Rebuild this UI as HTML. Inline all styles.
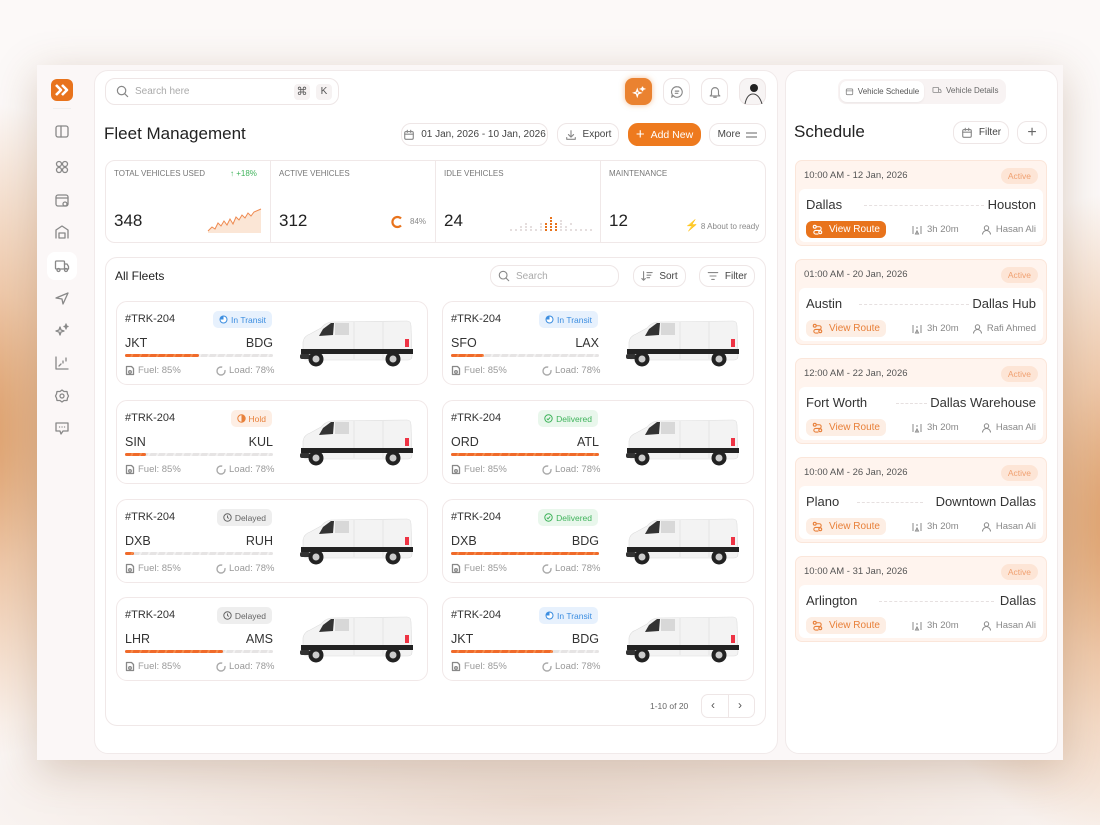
<!DOCTYPE html>
<html><head><meta charset="utf-8">
<style>
*{box-sizing:border-box;margin:0;padding:0}
body{width:1100px;height:825px;overflow:hidden;font-family:"Liberation Sans",sans-serif;color:#222;position:relative;
background:
radial-gradient(ellipse 260px 330px at -40px 430px,#d9955a 0%,rgba(230,170,120,.6) 45%,rgba(255,255,255,0) 100%),
radial-gradient(ellipse 260px 330px at 1140px 520px,#d9955a 0%,rgba(230,170,120,.6) 45%,rgba(255,255,255,0) 100%),
radial-gradient(ellipse 700px 120px at 550px 800px,rgba(220,190,170,.5),rgba(255,255,255,0)),
#fcf9f8}
.frame{position:absolute;left:37px;top:65px;width:1026px;height:695px;background:#fbf7f7;box-shadow:0 10px 40px rgba(120,70,30,.25)}
.abs{position:absolute}
.panel{position:absolute;background:#fff;border:1px solid #f1eaea;border-radius:14px}
.btn{position:absolute;border:1px solid #eee6e6;border-radius:9px;background:#fff;font-size:10px;color:#444;display:flex;align-items:center;justify-content:center;gap:6px}
svg{display:block}
.ic{stroke:#888;fill:none;stroke-width:1.3;stroke-linecap:round;stroke-linejoin:round}
.card{position:absolute;width:312px;height:84px;border:1px solid #f1e8e8;border-radius:11px;background:#fff}
.card .id{position:absolute;left:8px;top:11px;font-size:11px;color:#333}
.badge{position:absolute;top:9px;right:155px;height:17px;border-radius:5px;font-size:8.5px;display:flex;align-items:center;gap:3px;padding:0 6px}
.b-t{background:#e7f1fd;color:#3b8de0}
.b-h{background:#fdeee4;color:#e8803a}
.b-d{background:#e9f7ec;color:#3fb35b}
.b-y{background:#eeeeee;color:#666}
.card .from{position:absolute;left:8px;top:34px;font-size:12.5px;color:#333}
.card .to{position:absolute;left:118px;width:38px;text-align:right;top:34px;font-size:12.5px;color:#333}
.bar{position:absolute;left:8px;top:52px;width:148px;height:3px;border-radius:2px;background:repeating-linear-gradient(110deg,#e6e4e4 0 6px,#f3f2f2 6px 8px)}
.bar i{display:block;height:3px;border-radius:2px;background:repeating-linear-gradient(110deg,#f06a2a 0 6px,#f58a4a 6px 8px)}
.meta{position:absolute;top:63px;font-size:9.5px;color:#999;display:flex;align-items:center;gap:3px}
.van{position:absolute;left:180px;top:16px}
.sc{position:absolute;left:795px;width:252px;height:86px;background:#fff4ee;border:1px solid #fbe6da;border-radius:7px}
.sc .t{position:absolute;left:8px;top:9px;font-size:9.5px;color:#555}
.sc .act{position:absolute;right:8px;top:7px;background:#fde5d6;color:#f0a070;font-size:8.5px;border-radius:8px;padding:3px 7px}
.sc .in{position:absolute;left:3px;right:3px;top:28px;bottom:3px;background:#fff;border-radius:6px}
.sc .a{position:absolute;left:7px;top:8px;font-size:13px;color:#333}
.sc .b{position:absolute;right:7px;top:8px;font-size:13px;color:#333}
.sc .dash{position:absolute;top:16px;border-top:1px dashed #e6e0e0}
.vr{position:absolute;left:7px;top:32px;height:17px;width:80px;border-radius:6px;font-size:10px;display:flex;align-items:center;justify-content:center;gap:6px}
.vr.on{background:#e8731c;color:#fff}
.vr.off{background:#fdeee4;color:#e8803a}
.sm{position:absolute;top:35px;font-size:9.5px;color:#888;display:flex;align-items:center;gap:5px}
</style></head><body>
<svg width="0" height="0" style="position:absolute"><defs>
<g id="van">
<path d="M6 36 L6 24 Q7 18 13 16 L24 10 Q28 5 34 4 L110 3 Q114 3 114 8 L115 38 Q115 42 111 42 L10 42 Q6 42 6 38Z" fill="#f3f3f3" stroke="#ddd" stroke-width=".6"/>
<path d="M26 11 L34 5 L37 5 L36 17 L22 18Z" fill="#333"/>
<path d="M38 5 L52 5 L52 17 L38 17Z" fill="#d8d8d8"/>
<line x1="57" y1="4" x2="57" y2="41" stroke="#ddd" stroke-width=".7"/>
<line x1="86" y1="4" x2="86" y2="41" stroke="#ddd" stroke-width=".7"/>
<rect x="4" y="31" width="112" height="5" fill="#222"/>
<rect x="3" y="36" width="10" height="5" rx="2" fill="#333"/>
<rect x="108" y="21" width="4" height="8" fill="#e34"/>
<circle cx="19" cy="41" r="7.5" fill="#222"/><circle cx="19" cy="41" r="3.5" fill="#ccc"/>
<circle cx="96" cy="41" r="7.5" fill="#222"/><circle cx="96" cy="41" r="3.5" fill="#ccc"/>
</g></defs></svg>

<div class="frame"></div>
<div class="abs" style="left:51px;top:79px;width:22px;height:22px;background:#e8731c;border-radius:6px;display:flex;align-items:center;justify-content:center">
<svg width="14" height="12" viewBox="0 0 14 12"><path d="M1 1 L6 6 L1 11 M7 1 L12 6 L7 11" stroke="#fff" stroke-width="2.6" fill="none" stroke-linejoin="round"/></svg></div>
<div class="abs" style="left:53px;top:108px;width:18px;border-top:1px solid #eee"></div>
<div class="abs" style="left:47px;top:252px;width:30px;height:28px;background:#fff;border-radius:8px"></div>
<svg class="abs" style="left:54px;top:123px" width="16" height="320" viewBox="0 0 16 320">
<g class="ic"><rect x="2" y="3" width="12" height="11" rx="2"/><line x1="7" y1="3" x2="7" y2="14"/></g>
<g class="ic" transform="translate(0,36)"><circle cx="5" cy="5" r="2.5"/><circle cx="11" cy="5" r="2.5"/><circle cx="5" cy="11" r="2.5"/><circle cx="11" cy="11" r="2.5"/></g>
<g class="ic" transform="translate(0,69)"><rect x="2" y="3" width="12" height="11" rx="2"/><line x1="2" y1="6" x2="14" y2="6"/><circle cx="11" cy="12" r="2"/></g>
<g class="ic" transform="translate(0,101)"><path d="M2 14 L2 6 L8 2 L14 6 L14 14"/><rect x="5" y="9" width="6" height="5"/></g>
<g class="ic" transform="translate(0,134)"><rect x="1.5" y="4" width="9" height="8" rx="1"/><path d="M10.5 7 L13 7 L14.5 9.5 L14.5 12 L10.5 12"/><circle cx="4.5" cy="13" r="1.5"/><circle cx="12" cy="13" r="1.5"/></g>
<g class="ic" transform="translate(0,167)"><path d="M2 8 L14 3 L9 14 L8 9Z"/></g>
<g class="ic" transform="translate(0,199)"><path d="M6 5 L7 8 L10 9 L7 10 L6 13 L5 10 L2 9 L5 8Z"/><path d="M12 2 L12.5 4 L14 4.5 L12.5 5 L12 7 L11.5 5 L10 4.5 L11.5 4Z"/></g>
<g class="ic" transform="translate(0,232)"><path d="M2 2 L2 14 L14 14"/><path d="M5 11 L7 9 M9 8 L9 6 M12 6 L12 3"/></g>
<g class="ic" transform="translate(0,265)"><circle cx="8" cy="8" r="2"/><path d="M8 2 L10 3.5 L13 3.5 L13.5 6 L14.5 8 L13.5 10 L13 12.5 L10 12.5 L8 14 L6 12.5 L3 12.5 L2.5 10 L1.5 8 L2.5 6 L3 3.5 L6 3.5Z"/></g>
<g class="ic" transform="translate(0,297)"><path d="M2 3 L14 3 L14 11 L9 11 L7 14 L6 11 L2 11Z"/><path d="M5.5 7h.1 M8 7h.1 M10.5 7h.1"/></g>
</svg>

<div class="panel" style="left:94px;top:70px;width:684px;height:684px;border-radius:14px"></div>
<div class="btn" style="left:105px;top:78px;width:234px;height:27px;justify-content:flex-start;padding-left:10px;border-radius:10px;color:#aaa">
<svg width="13" height="13" viewBox="0 0 14 14"><g class="ic" stroke="#999"><circle cx="6" cy="6" r="4.5"/><line x1="9.5" y1="9.5" x2="12.5" y2="12.5"/></g></svg>Search here
<span style="position:absolute;left:188px;top:5px;width:16px;height:16px;background:#f6f2f2;border-radius:4px;font-size:11px;color:#555;text-align:center;line-height:16px">⌘</span>
<span style="position:absolute;left:210px;top:5px;width:16px;height:16px;background:#f6f2f2;border-radius:4px;font-size:10px;color:#555;text-align:center;line-height:16px">K</span></div>
<div class="abs" style="left:625px;top:78px;width:27px;height:27px;background:#ea8230;border-radius:8px;box-shadow:0 0 6px rgba(234,130,48,.5);display:flex;align-items:center;justify-content:center">
<svg width="14" height="14" viewBox="0 0 16 16"><g stroke="#fff" fill="none" stroke-width="1.4"><path d="M6 5 L7 8 L10 9 L7 10 L6 13 L5 10 L2 9 L5 8Z"/><path d="M12 2 L12.5 4 L14 4.5 L12.5 5 L12 7 L11.5 5 L10 4.5 L11.5 4Z"/></g></svg></div>
<div class="btn" style="left:663px;top:78px;width:27px;height:27px"><svg width="14" height="14" viewBox="0 0 16 16"><g class="ic" stroke="#555"><path d="M8 2a6 6 0 1 1-4.5 10L2 14l.6-3A6 6 0 0 1 8 2z"/><line x1="6" y1="7" x2="10" y2="7"/><line x1="6" y1="9.5" x2="9" y2="9.5"/></g></svg></div>
<div class="btn" style="left:701px;top:78px;width:27px;height:27px"><svg width="14" height="14" viewBox="0 0 16 16"><g class="ic" stroke="#555"><path d="M4 11V7a4 4 0 0 1 8 0v4l1.5 1.5h-11z"/><path d="M6.5 14h3"/></g></svg></div>
<div class="btn" style="left:739px;top:78px;width:27px;height:27px;background:#f7f4f4"><svg width="22" height="24" viewBox="0 0 22 24"><circle cx="12" cy="8" r="4" fill="#222"/><path d="M3 24 Q5 14 11 14 Q17 14 20 24" stroke="#444" fill="none" stroke-width="1"/></svg></div>

<div class="abs" style="left:104px;top:124px;font-size:17px;color:#222">Fleet Management</div>
<div class="btn" style="left:401px;top:123px;width:147px;height:23px;border-radius:10px"><svg width="12" height="12" viewBox="0 0 14 14"><g class="ic" stroke="#555"><rect x="2" y="3" width="10" height="9" rx="1.5"/><line x1="2" y1="6" x2="12" y2="6"/><line x1="5" y1="1.5" x2="5" y2="4"/><line x1="9" y1="1.5" x2="9" y2="4"/></g></svg>01 Jan, 2026 - 10 Jan, 2026</div>
<div class="btn" style="left:557px;top:123px;width:62px;height:23px;border-radius:10px"><svg width="12" height="12" viewBox="0 0 14 14"><g class="ic" stroke="#555"><path d="M7 2v7M4 6.5l3 3 3-3M2 10v2h10v-2"/></g></svg>Export</div>
<div class="btn" style="left:628px;top:123px;width:73px;height:23px;border-radius:10px;background:#ee7a1e;border-color:#ee7a1e;color:#fff;font-size:10.5px"><span style="font-size:15px;line-height:10px">+</span>Add New</div>
<div class="btn" style="left:709px;top:123px;width:57px;height:23px;border-radius:10px">More <svg width="11" height="8"><path d="M0 2h11M0 6h11" stroke="#666"/></svg></div>

<div class="abs" style="left:105px;top:160px;width:661px;height:83px;border:1px solid #f0e8e8;border-radius:10px;background:#fff"></div>
<div class="abs" style="left:270px;top:161px;height:81px;border-left:1px solid #f0e8e8"></div>
<div class="abs" style="left:435px;top:161px;height:81px;border-left:1px solid #f0e8e8"></div>
<div class="abs" style="left:600px;top:161px;height:81px;border-left:1px solid #f0e8e8"></div>
<div class="abs" style="left:114px;top:169px;font-size:8px;color:#777">TOTAL VEHICLES USED</div>
<div class="abs" style="left:230px;top:169px;font-size:8px;color:#3fb35b">↑ +18%</div>
<div class="abs" style="left:114px;top:211px;font-size:17px">348</div>
<svg class="abs" style="left:207px;top:207px" width="55" height="26" viewBox="0 0 55 26"><path d="M1 24 L5 20 L8 22 L11 16 L14 19 L17 14 L20 18 L23 12 L26 17 L29 10 L32 13 L35 8 L38 11 L41 6 L44 9 L47 5 L54 2 L54 26 L1 26Z" fill="#fbe6d6"/><path d="M1 24 L5 20 L8 22 L11 16 L14 19 L17 14 L20 18 L23 12 L26 17 L29 10 L32 13 L35 8 L38 11 L41 6 L44 9 L47 5 L54 2" stroke="#ef8a50" fill="none" stroke-width="1"/></svg>
<div class="abs" style="left:279px;top:169px;font-size:8px;color:#777">ACTIVE VEHICLES</div>
<div class="abs" style="left:279px;top:211px;font-size:17px">312</div>
<svg class="abs" style="left:390px;top:215px" width="14" height="14"><path d="M11 3.5 A5 5 0 1 0 11 10.5" stroke="#e8731c" stroke-width="2.2" fill="none"/></svg>
<div class="abs" style="left:410px;top:217px;font-size:8px;color:#888">84%</div>
<div class="abs" style="left:444px;top:169px;font-size:8px;color:#777">IDLE VEHICLES</div>
<div class="abs" style="left:444px;top:211px;font-size:17px">24</div>
<svg class="abs" style="left:510px;top:214px" width="86" height="18" viewBox="0 0 86 18">
<g fill="#e5dede"><rect x="0" y="15" width="2" height="2"/><rect x="5" y="15" width="2" height="2"/><rect x="10" y="12" width="2" height="2"/><rect x="10" y="15" width="2" height="2"/><rect x="15" y="9" width="2" height="2"/><rect x="15" y="12" width="2" height="2"/><rect x="15" y="15" width="2" height="2"/><rect x="20" y="12" width="2" height="2"/><rect x="20" y="15" width="2" height="2"/><rect x="25" y="15" width="2" height="2"/><rect x="30" y="9" width="2" height="2"/><rect x="30" y="12" width="2" height="2"/><rect x="30" y="15" width="2" height="2"/><rect x="50" y="6" width="2" height="2"/><rect x="50" y="9" width="2" height="2"/><rect x="50" y="12" width="2" height="2"/><rect x="50" y="15" width="2" height="2"/><rect x="55" y="12" width="2" height="2"/><rect x="55" y="15" width="2" height="2"/><rect x="60" y="9" width="2" height="2"/><rect x="60" y="15" width="2" height="2"/><rect x="65" y="15" width="2" height="2"/><rect x="70" y="15" width="2" height="2"/><rect x="75" y="15" width="2" height="2"/><rect x="80" y="15" width="2" height="2"/></g>
<g fill="#e8731c"><rect x="35" y="9" width="2" height="2"/><rect x="35" y="12" width="2" height="2"/><rect x="35" y="15" width="2" height="2"/><rect x="40" y="3" width="2" height="2"/><rect x="40" y="6" width="2" height="2"/><rect x="40" y="9" width="2" height="2"/><rect x="40" y="12" width="2" height="2"/><rect x="40" y="15" width="2" height="2"/><rect x="45" y="9" width="2" height="2"/><rect x="45" y="12" width="2" height="2"/><rect x="45" y="15" width="2" height="2"/></g></svg>
<div class="abs" style="left:609px;top:169px;font-size:8px;color:#777">MAINTENANCE</div>
<div class="abs" style="left:609px;top:211px;font-size:17px">12</div>
<div class="abs" style="left:685px;top:219px;font-size:8px;color:#888"><span style="color:#e8731c;font-size:11px">⚡</span> 8 About to ready</div>

<div class="abs" style="left:105px;top:257px;width:661px;height:469px;border:1px solid #f0e8e8;border-radius:12px;background:#fff"></div>
<div class="abs" style="left:115px;top:269px;font-size:12px;color:#222">All Fleets</div>
<div class="btn" style="left:490px;top:265px;width:129px;height:22px;justify-content:flex-start;padding-left:7px;color:#aaa;border-radius:10px"><svg width="12" height="12" viewBox="0 0 14 14"><g class="ic" stroke="#999"><circle cx="6" cy="6" r="4.5"/><line x1="9.5" y1="9.5" x2="12.5" y2="12.5"/></g></svg>Search</div>
<div class="btn" style="left:633px;top:265px;width:53px;height:22px;border-radius:10px"><svg width="12" height="12" viewBox="0 0 14 14"><g class="ic" stroke="#555"><path d="M3 2v10M1 10l2 2 2-2M7 3h6M7 6h4.5M7 9h3"/></g></svg>Sort</div>
<div class="btn" style="left:699px;top:265px;width:56px;height:22px;border-radius:10px"><svg width="12" height="12" viewBox="0 0 14 14"><g class="ic" stroke="#555"><path d="M1.5 3h11M3.5 7h7M5.5 11h3"/></g></svg>Filter</div>

<div id="cards"></div>

<div class="abs" style="left:650px;top:701px;font-size:8.5px;color:#666">1-10 of 20</div>
<div class="abs" style="left:701px;top:694px;width:54px;height:24px;border:1px solid #eee6e6;border-radius:7px;background:#fff"></div>
<div class="abs" style="left:728px;top:695px;height:22px;border-left:1px solid #eee6e6"></div>
<div class="abs" style="left:711px;top:698px;font-size:12px;color:#555">‹</div>
<div class="abs" style="left:738px;top:698px;font-size:12px;color:#555">›</div>

<div class="panel" style="left:785px;top:70px;width:273px;height:684px"></div>
<div class="abs" style="left:838px;top:79px;width:168px;height:25px;background:#f8f3f3;border-radius:8px"></div>
<div class="abs" style="left:840px;top:81px;width:84px;height:21px;background:#fff;border-radius:7px;box-shadow:0 1px 2px rgba(0,0,0,.06);font-size:8px;color:#555;display:flex;align-items:center;justify-content:center;gap:4px"><svg width="9" height="9" viewBox="0 0 14 14"><g class="ic"><rect x="2" y="3" width="10" height="9" rx="1.5"/><line x1="2" y1="6" x2="12" y2="6"/></g></svg>Vehicle Schedule</div>
<div class="abs" style="left:932px;top:86px;font-size:8px;color:#666;display:flex;gap:4px;align-items:center"><svg width="10" height="9" viewBox="0 0 16 14"><g class="ic"><rect x="1.5" y="2" width="9" height="8" rx="1"/><path d="M10.5 5 L13 5 L14.5 7.5 L14.5 10 L10.5 10"/></g></svg>Vehicle Details</div>
<div class="abs" style="left:794px;top:122px;font-size:17px;color:#222">Schedule</div>
<div class="btn" style="left:953px;top:121px;width:56px;height:23px;border-radius:10px"><svg width="12" height="12" viewBox="0 0 14 14"><g class="ic" stroke="#555"><rect x="2" y="3" width="10" height="9" rx="1.5"/><line x1="2" y1="6" x2="12" y2="6"/><line x1="5" y1="1.5" x2="5" y2="4"/><line x1="9" y1="1.5" x2="9" y2="4"/></g></svg>Filter</div>
<div class="btn" style="left:1017px;top:121px;width:30px;height:23px;border-radius:10px;font-size:16px;color:#666">+</div>
<div id="sched"></div>

<script>
var cards=[
[116,301,'In Transit','t','JKT','BDG',50],[442,301,'In Transit','t','SFO','LAX',22],
[116,400,'Hold','h','SIN','KUL',14],[442,400,'Delivered','d','ORD','ATL',100],
[116,499,'Delayed','y','DXB','RUH',6],[442,499,'Delivered','d','DXB','BDG',100],
[116,597,'Delayed','y','LHR','AMS',66],[442,597,'In Transit','t','JKT','BDG',69]];
var ico={t:'<svg width="9" height="9"><circle cx="4.5" cy="4.5" r="4" fill="#3b8de0"/><path d="M4.5 1.5A3 3 0 1 1 1.5 4.5H4.5Z" fill="#fff"/></svg>',
h:'<svg width="9" height="9"><circle cx="4.5" cy="4.5" r="3.7" fill="none" stroke="#e8803a"/><path d="M4.5 1A3.5 3.5 0 0 1 4.5 8Z" fill="#e8803a"/></svg>',
d:'<svg width="9" height="9"><circle cx="4.5" cy="4.5" r="3.7" fill="none" stroke="#3fb35b"/><path d="M2.8 4.6l1.2 1.2 2.2-2.4" stroke="#3fb35b" fill="none"/></svg>',
y:'<svg width="9" height="9"><circle cx="4.5" cy="4.5" r="3.7" fill="none" stroke="#666"/><path d="M4.5 2.5v2l1.3 1" stroke="#666" fill="none"/></svg>'};
var h='';
cards.forEach(function(c){
h+='<div class="card" style="left:'+c[0]+'px;top:'+c[1]+'px"><div class="id">#TRK-204</div>'+
'<div class="badge b-'+c[3]+'">'+ico[c[3]]+c[2]+'</div>'+
'<div class="from">'+c[4]+'</div><div class="to">'+c[5]+'</div>'+
'<div class="bar"><i style="width:'+c[6]+'%"></i></div>'+
'<div class="meta" style="left:8px"><svg width="10" height="11" viewBox="0 0 10 11"><g class="ic" stroke="#aaa" stroke-width="1"><path d="M1.5 1.5h5l2 2v6h-7z"/><circle cx="5" cy="7" r="1.3"/></g></svg> Fuel: 85%</div>'+
'<div class="meta" style="left:99px"><svg width="10" height="10" viewBox="0 0 10 10"><circle cx="5" cy="5" r="4" stroke="#aaa" stroke-width="1.4" fill="none" stroke-dasharray="20 4"/></svg> Load: 78%</div>'+
'<svg class="van" width="118" height="52" viewBox="0 0 118 52"><use href="#van"/></svg></div>';});
document.getElementById('cards').innerHTML=h;
var s=[[160,'10:00 AM - 12 Jan, 2026','Dallas','Houston','Hasan Ali',1,65,185],[259,'01:00 AM - 20 Jan, 2026','Austin','Dallas Hub','Rafi Ahmed',0,60,170],
[358,'12:00 AM - 22 Jan, 2026','Fort Worth','Dallas Warehouse','Hasan Ali',0,97,128],[457,'10:00 AM - 26 Jan, 2026','Plano','Downtown Dallas','Hasan Ali',0,58,124],
[556,'10:00 AM - 31 Jan, 2026','Arlington','Dallas','Hasan Ali',0,80,195]];
var g='';
s.forEach(function(r){
g+='<div class="sc" style="top:'+r[0]+'px"><div class="t">'+r[1]+'</div><div class="act">Active</div><div class="in">'+
'<div class="a">'+r[2]+'</div><div class="b">'+r[3]+'</div><div class="dash" style="left:'+r[6]+'px;width:'+(r[7]-r[6])+'px"></div>'+
'<div class="vr '+(r[5]?'on':'off')+'"><svg width="11" height="11" viewBox="0 0 12 12"><g fill="none" stroke="'+(r[5]?'#fff':'#e8803a')+'" stroke-width="1.2"><circle cx="3" cy="3" r="1.6"/><circle cx="9" cy="9" r="1.6"/><path d="M5 3h3a2 2 0 0 1 0 4H4a2 2 0 0 0 0 4h3"/></g></svg>View Route</div>'+
'<div class="sm" style="left:113px"><svg width="10" height="10" viewBox="0 0 10 10"><path d="M1 1v8M9 1v8M5 2v2M5 6l-1.5 3h3z" stroke="#888" fill="none"/></svg>3h 20m</div>'+
'<div class="sm" style="right:7px"><svg width="9" height="10" viewBox="0 0 9 10"><circle cx="4.5" cy="3" r="2.2" stroke="#888" fill="none"/><path d="M.5 9.5a4 4 0 0 1 8 0" stroke="#888" fill="none"/></svg>'+r[4]+'</div>'+
'</div></div>';});
document.getElementById('sched').innerHTML=g;
</script>
</body></html>
